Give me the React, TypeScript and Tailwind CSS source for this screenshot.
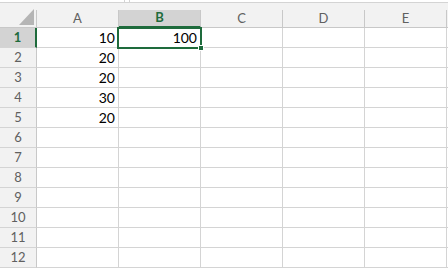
import React from 'react';

const cols = ['A', 'B', 'C', 'D', 'E'];
const values: Record<string, string> = {
    A1: '10', A2: '20', A3: '20', A4: '30', A5: '20', B1: '100',
};

export default function App() {
    const rows = Array.from({ length: 12 }, (_, i) => i + 1);

    return (
        <div className="relative w-[448px] h-[270px] bg-white overflow-hidden font-['Lato','Liberation_Sans',sans-serif]">
            {/* formula bar edge */}
            <div className="h-[3px] bg-white border-b border-[#d4d4d4] flex">
                <div className="w-[125px] border-r border-[#d4d4d4]" />
                <div className="w-[5px] border-r border-[#d4d4d4]" />
            </div>

            <div className="h-[7px] bg-[#f2f2f2]" />

            <div className="grid grid-cols-[37px_repeat(5,82px)_1fr]">
                {/* header row */}
                <div className="h-[18px] bg-[#f2f2f2] border-r border-b border-[#c8c8c8] relative">
                    <svg className="absolute left-[19px] top-[-1px]" width="15" height="16" viewBox="0 0 15 16">
                        <polygon points="15,0 15,16 0,16" fill="#b5b5b5" />
                    </svg>
                </div>
                {cols.map((c) => (
                    <div
                        key={c}
                        className={`h-[18px] flex items-center justify-center text-[13px] border-r ${c === 'B'
                            ? 'bg-[#d3d3d3] text-[#1e6b3c] font-bold border-b-2 border-b-[#1e6b3c] border-r-[#c8c8c8]'
                            : 'bg-[#f2f2f2] text-[#606060] border-b border-[#c8c8c8]'
                            }`}
                    >
                        {c}
                    </div>
                ))}
                <div className="h-[18px] bg-[#f2f2f2] border-b border-[#c8c8c8]" />

                {rows.map((r) => (
                    <React.Fragment key={r}>
                        <div
                            className={`h-[20px] flex items-center justify-center text-[13px] border-b border-[#d4d4d4] ${r === 1
                                ? 'bg-[#d3d3d3] text-[#1e6b3c] font-bold border-r-2 border-r-[#1e6b3c]'
                                : 'bg-[#f2f2f2] text-[#606060] border-r border-r-[#c8c8c8]'
                                }`}
                        >
                            {r}
                        </div>
                        {cols.map((c) => (
                            <div
                                key={c}
                                className="h-[20px] flex items-center justify-end pr-[3px] text-[14px] text-black border-r border-b border-[#d4d4d4]"
                            >
                                {values[`${c}${r}`] ?? ''}
                            </div>
                        ))}
                        <div className="h-[20px] border-b border-[#d4d4d4]" />
                    </React.Fragment>
                ))}
            </div>

            {/* selected cell B1 */}
            <div className="absolute left-[117px] top-[27px] w-[85px] h-[22px] border-2 border-[#1e6b3c] pointer-events-none" />
            <div className="absolute left-[198px] top-[45px] w-[6px] h-[6px] bg-[#1e6b3c] border border-white" />
        </div>
    );
}
